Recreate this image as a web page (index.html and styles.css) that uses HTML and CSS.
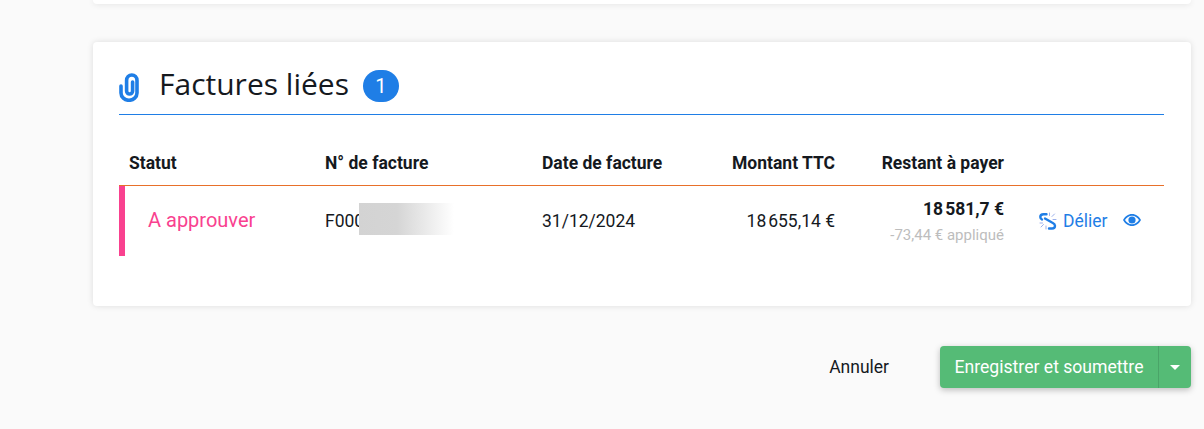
FILE: index.html
```html
<!DOCTYPE html>
<html lang="fr">
<head>
<meta charset="utf-8">
<title>Factures liées</title>
<link rel="stylesheet" href="styles.css">
</head>
<body>
<main class="page">
  <div class="card card-top"></div>
  <section class="card card-linked">
    <header class="section-head">
      <svg class="clip-icon" width="20" height="29" viewBox="0 0 20 29" fill="none" stroke="#1f7ee6" stroke-width="3.6" stroke-linecap="round">
        <path d="M2 13v7a8 7.3 0 0 0 16 0V7.500a5.200 5.500 0 0 0-10.400 0V18a3 3 0 0 0 6 0V9"/>
      </svg>
      <h2 class="section-title">Factures liées</h2>
      <span class="badge">1</span>
    </header>
    <table class="invoices">
      <colgroup>
        <col class="c-status"><col class="c-num"><col class="c-date"><col class="c-amount"><col class="c-rest"><col class="c-actions">
      </colgroup>
      <thead>
        <tr>
          <th>Statut</th>
          <th>N° de facture</th>
          <th>Date de facture</th>
          <th class="num">Montant TTC</th>
          <th class="num">Restant à payer</th>
          <th></th>
        </tr>
      </thead>
      <tbody>
        <tr>
          <td class="status">A approuver</td>
          <td><span class="ref">F000<span class="mask"></span></span></td>
          <td>31/12/2024</td>
          <td class="num">18<span class="thin"> </span>655,14 €</td>
          <td class="num">
            <div class="rest">18<span class="thin"> </span>581,7 €</div>
            <div class="applied">-73,44 € appliqué</div>
          </td>
          <td>
            <div class="actions">
              <a class="link" href="#">
                <svg width="18" height="18" viewBox="0 0 18 18" fill="none" stroke="#1f7ee6" stroke-linecap="round" stroke-linejoin="round">
                  <path stroke-width="2.400" d="M7.500 2.200H4.500C2.600 2.200 1.300 3.400 1.300 5c0 1.200.7 2 1.700 2.500"/>
                  <path stroke-width="2.400" d="M6 6.500l7 4c1.300.7 3 1.300 3 3.300 0 1.600-1.300 2.700-3 2.700H10"/>
                  <path stroke-width="1" stroke="#9bb0ec" d="M10.500 1v2.500M13 4.500 15.500 2M14 7.500h3M1 11h2.500M4.500 12.500 2 15M7 14v3"/>
                </svg>
                <span>Délier</span>
              </a>
              <a class="eye" href="#" aria-label="Voir">
                <svg width="18" height="14" viewBox="0 0 18 14">
                  <path fill="#1f7ee6" fill-rule="evenodd" d="M9 1C5 1 2 3.500 0 7c2 3.500 5 6 9 6s7-2.500 9-6c-2-3.500-5-6-9-6Zm0 1.700c3 0 5.300 1.800 7 4.300-1.700 2.500-4 4.300-7 4.300S3.700 9.500 2 7c1.700-2.500 4-4.300 7-4.300Z"/>
                  <circle cx="9" cy="7" r="3.600" fill="#1f7ee6"/>
                </svg>
              </a>
            </div>
          </td>
        </tr>
      </tbody>
    </table>
  </section>
  <footer class="form-actions">
    <button class="btn-cancel" type="button">Annuler</button>
    <div class="split">
      <button class="btn-main" type="button">Enregistrer et soumettre</button>
      <button class="btn-caret" type="button" aria-label="Plus"><span class="caret"></span></button>
    </div>
  </footer>
</main>
</body>
</html>
```
FILE: styles.css
```css
* { box-sizing: border-box; }
html, body { margin: 0; height: 100%; }
body {
  background: #fafafa;
  color: #15191e;
  font-family: Roboto, "Liberation Sans", sans-serif;
  font-size: 17.500px;
  overflow: hidden;
}
.page { padding: 0 13px 0 93px; }
.card {
  background: #fff;
  border-radius: 4px;
  box-shadow: 0 0 6px rgba(0, 0, 0, 0.12);
}
.card-top { height: 4px; margin-bottom: 38px; border-radius: 0 0 4px 4px; }
.card-linked { height: 264px; padding: 26px 27px 0 26px; }
.section-head {
  display: flex;
  align-items: center;
  height: 47px;
  padding-bottom: 10px;
  border-bottom: 1px solid #1f7ee6;
}
.clip-icon { flex: none; margin-top: 2px; }
.section-title {
  margin: -5px 14px 0 20px;
  font-family: "Open Sans", "Liberation Sans", sans-serif;
  font-size: 30px;
  font-weight: 400;
  line-height: 36px;
  color: #15191e;
}
.badge {
  width: 36px;
  height: 32px;
  border-radius: 16px;
  background: #1f7ee6;
  color: #fff;
  font-size: 20px;
  line-height: 33px;
  text-align: center;
}
.invoices {
  width: 100%;
  margin-top: 30px;
  table-layout: fixed;
  border-collapse: separate;
  border-spacing: 0;
}
.c-status { width: 196px; }
.c-num { width: 217px; }
.c-date { width: 160px; }
.c-amount { width: 153px; }
.c-rest { width: 169px; }
.invoices th {
  height: 41px;
  padding: 0 10px 4px;
  border-bottom: 1px solid #e8702a;
  text-align: left;
  font-weight: 700;
}
.invoices th.num, .invoices td.num { text-align: right; }
.invoices td {
  height: 70px;
  padding: 0 10px;
  vertical-align: middle;
}
.invoices td.status {
  padding: 0 0 2px 23px;
  border-left: 6px solid #f9418f;
  color: #f9418f;
  font-size: 20px;
}
.ref { position: relative; display: inline-block; }
.mask {
  position: absolute;
  left: 34px;
  top: -8px;
  width: 95px;
  height: 32px;
  background: linear-gradient(90deg, #d3d3d3 0%, #d5d5d5 40%, #fff 100%);
}
.thin { font-size: 8px; }
.rest { font-weight: 700; line-height: 22px; padding-top: 1px; }
.applied { margin-top: 1px; color: #bdbdbd; font-size: 15px; line-height: 20px; }
.actions { display: flex; align-items: center; padding-left: 15px; }
.link {
  display: flex;
  align-items: center;
  gap: 6px;
  color: #1f7ee6;
  text-decoration: none;
}
.eye { display: flex; margin: -2px 0 0 15px; }
.form-actions {
  display: flex;
  justify-content: flex-end;
  align-items: center;
  margin-top: 40px;
}
.btn-cancel {
  margin-right: 51px;
  padding: 0;
  border: 0;
  background: none;
  color: #15191e;
  font: 400 17.500px Roboto, "Liberation Sans", sans-serif;
}
.split {
  display: flex;
  height: 42px;
  border-radius: 4px;
  background: #55bb76;
  box-shadow: 0 2px 6px rgba(0, 0, 0, 0.25);
}
.btn-main, .btn-caret {
  border: 0;
  background: none;
  color: #fff;
  font: 400 17.600px Roboto, "Liberation Sans", sans-serif;
}
.btn-main { width: 219px; padding: 0; border-right: 1px solid #4aa468; }
.btn-caret { display: flex; align-items: center; justify-content: center; width: 32px; padding: 0; }
.caret {
  width: 0;
  height: 0;
  border-left: 5px solid transparent;
  border-right: 5px solid transparent;
  border-top: 5px solid #fff;
}
```
